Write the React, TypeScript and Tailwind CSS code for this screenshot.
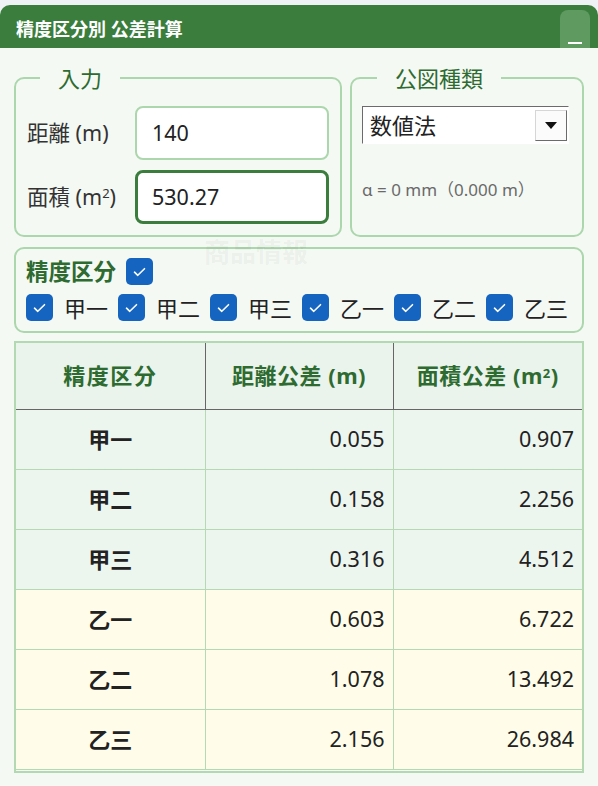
import React from "react";

type Row = { name: string; dist: string; area: string; group: "kou" | "otsu" };

const rows: Row[] = [
  { name: "甲一", dist: "0.055", area: "0.907", group: "kou" },
  { name: "甲二", dist: "0.158", area: "2.256", group: "kou" },
  { name: "甲三", dist: "0.316", area: "4.512", group: "kou" },
  { name: "乙一", dist: "0.603", area: "6.722", group: "otsu" },
  { name: "乙二", dist: "1.078", area: "13.492", group: "otsu" },
  { name: "乙三", dist: "2.156", area: "26.984", group: "otsu" },
];

const grades = ["甲一", "甲二", "甲三", "乙一", "乙二", "乙三"];

function Check() {
  return (
    <span className="flex h-[27px] w-[27px] shrink-0 items-center justify-center rounded-[5px] bg-[#1565c0]">
      <svg width="13" height="10" viewBox="0 0 13 10" fill="none">
        <path d="M1.5 5.2 4.8 8.3 11.5 1.7" stroke="white" strokeWidth="1.6" strokeLinecap="round" strokeLinejoin="round" />
      </svg>
    </span>
  );
}

export default function App() {
  return (
    <div className="relative min-h-[786px] bg-[#eef2f4] pt-[5px] font-['Noto_Sans','Noto_Sans_CJK_JP',sans-serif]">
      <div className="flex h-[43px] items-end justify-between rounded-t-[10px] bg-[#3a7d3c] pl-4 pr-2">
        <h1 className="mb-[10px] text-[18px] font-bold leading-none text-white">精度区分別 公差計算</h1>
        <button className="flex h-[38px] w-[30px] items-end justify-center rounded-t-[8px] bg-[#5f9a61] pb-[4px]">
          <span className="block h-[2px] w-[14px] bg-white" />
        </button>
      </div>

      <div className="bg-[#f4f9f4] px-[14px] pt-[16px] pb-[14px]">
        <div className="flex gap-2">
          <fieldset className="w-[328px] rounded-[10px] border-2 border-[#acd6ac] px-[11px] pt-[14px] pb-[11px]">
            <legend className="ml-[13px] px-[18px] text-[22px] leading-[28px] text-[#2e6b30]">入力</legend>
            <div className="flex flex-col gap-[10px]">
              <div className="flex items-center justify-between">
                <span className="whitespace-nowrap text-[21.5px] text-[#333]">距離 (m)</span>
                <div className="flex h-[54px] w-[194px] items-center rounded-[8px] border-2 border-[#acd6ac] bg-white px-[15px] text-[21.5px] text-[#222]">
                  140
                </div>
              </div>
              <div className="flex items-center justify-between">
                <span className="whitespace-nowrap text-[21.5px] text-[#333]">
                  面積 (m<sup className="text-[13px]">2</sup>)
                </span>
                <div className="flex h-[54px] w-[194px] items-center rounded-[8px] border-[3px] border-[#3a7d3c] bg-white px-[14px] text-[21.5px] text-[#222]">
                  530.27
                </div>
              </div>
            </div>
          </fieldset>

          <fieldset className="flex-1 rounded-[10px] border-2 border-[#acd6ac] px-[10px] pt-[14px] pb-[11px]">
            <legend className="ml-[15px] px-[18px] text-[22px] leading-[28px] text-[#2e6b30]">公図種類</legend>
            <div className="flex h-[38px] w-[207px] items-center justify-between border border-b-white border-l-[#6b6b6b] border-r-white border-t-[#6b6b6b] bg-white pl-[7px] pr-[1px]">
              <span className="text-[22px] leading-none text-[#222]">数値法</span>
              <span className="flex h-[31px] w-[32px] items-center justify-center border border-b-[#6b6b6b] border-l-[#d6d6d6] border-r-[#6b6b6b] border-t-[#d6d6d6] bg-[#fbfbfb]">
                <svg width="12" height="7" viewBox="0 0 12 7">
                  <path d="M0 0h12L6 7z" fill="#111" />
                </svg>
              </span>
            </div>
            <p className="mt-[33px] whitespace-nowrap text-[17px] text-[#6a6a6a]">α = 0 mm（0.000 m）</p>
          </fieldset>
        </div>

        <div className="mt-[10px] rounded-[10px] border-2 border-[#acd6ac] px-[10px] pt-[9px] pb-[10px]">
          <div className="flex items-center gap-[10px]">
            <span className="text-[22.5px] font-bold leading-[27px] text-[#2e6b30]">精度区分</span>
            <Check />
          </div>
          <div className="mt-[9px] flex items-center gap-[10px]">
            {grades.map((g) => (
              <label key={g} className="flex shrink-0 items-center gap-[11px]">
                <Check />
                <span className="whitespace-nowrap text-[22px] leading-none text-[#222]">{g}</span>
              </label>
            ))}
          </div>
        </div>

        <div className="mt-[8px] border-2 border-[#b3d9b3] pb-[1px]">
          <table className="w-full table-fixed border-collapse">
            <colgroup>
              <col className="w-[189px]" />
              <col className="w-[188px]" />
              <col />
            </colgroup>
            <thead>
              <tr className="h-[66px] bg-[#eaf4ec]">
                <th className="border border-[#666] border-l-0 border-t-0 text-[22px] font-bold tracking-[1.5px] text-[#2e6b30]">精度区分</th>
                <th className="border border-[#666] border-t-0 text-[22px] font-bold tracking-[0.5px] text-[#2e6b30]">距離公差 (m)</th>
                <th className="border border-[#666] border-r-0 border-t-0 text-[22px] font-bold tracking-[0.5px] text-[#2e6b30]">
                  面積公差 (m<sup className="text-[13px]">2</sup>)
                </th>
              </tr>
            </thead>
            <tbody>
              {rows.map((r) => (
                <tr key={r.name} className={`h-[60px] ${r.group === "kou" ? "bg-[#edf5ef]" : "bg-[#fffde9]"}`}>
                  <td className="border border-l-0 border-[#b5d9b5] text-center text-[22px] font-bold text-[#222]">{r.name}</td>
                  <td className="border border-[#b5d9b5] pr-[8px] text-right text-[21.5px] text-[#222]">{r.dist}</td>
                  <td className="border border-r-0 border-[#b5d9b5] pr-[8px] text-right text-[21.5px] text-[#222]">{r.area}</td>
                </tr>
              ))}
            </tbody>
          </table>
        </div>
      </div>

      <span className="pointer-events-none absolute left-[204px] top-[233px] text-[26px] font-bold text-black/[0.05]">商品情報</span>
    </div>
  );
}
